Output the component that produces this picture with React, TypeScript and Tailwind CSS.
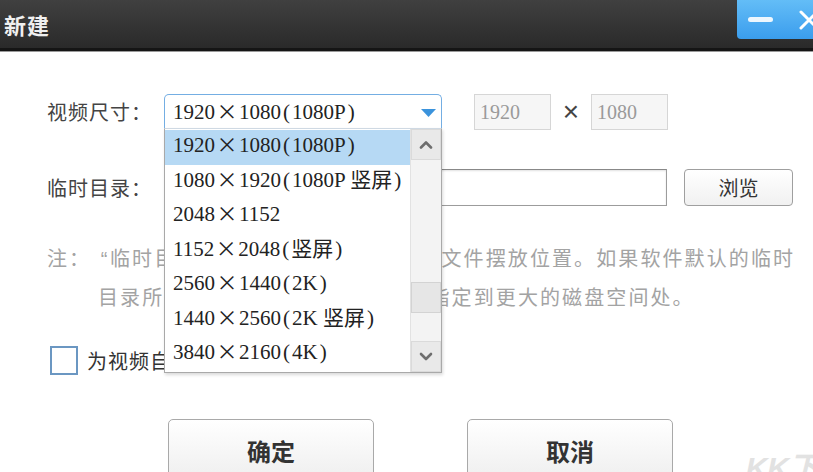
import React from 'react';

const cjk = '"Noto Sans CJK SC", "Noto Sans", sans-serif';
const mixed = '"Liberation Serif", "Noto Sans CJK SC", serif';

const options = [
  ['1920', '1080', '1080P'],
  ['1080', '1920', '1080P 竖屏'],
  ['2048', '1152', ''],
  ['1152', '2048', '竖屏'],
  ['2560', '1440', '2K'],
  ['1440', '2560', '2K 竖屏'],
  ['3840', '2160', '4K'],
];

function Size({ w, h, tag }: { w: string; h: string; tag: string }) {
  return (
    <span className="whitespace-nowrap" style={{ fontFamily: mixed }}>
      {w}
      <span className="inline-block w-[24px] text-center" style={{ fontFamily: cjk }}>×</span>
      {h}
      {tag && (
        <>
          <span className="inline-block w-[11px] text-center">(</span>
          {tag}
          <span className="inline-block w-[11px] text-center">)</span>
        </>
      )}
    </span>
  );
}

function Chevron({ up }: { up?: boolean }) {
  return (
    <svg width="14" height="9" viewBox="0 0 14 9">
      <path
        d={up ? 'M2 7.5 L7 2.5 L12 7.5' : 'M2 2 L7 7 L12 2'}
        fill="none"
        stroke="#6e6e6e"
        strokeWidth="2.6"
        strokeLinecap="round"
        strokeLinejoin="round"
      />
    </svg>
  );
}

export default function App() {
  return (
    <div className="relative w-[813px] h-[472px] overflow-hidden bg-white" style={{ fontFamily: cjk }}>
      {/* title bar */}
      <div className="relative h-[48px] bg-gradient-to-b from-[#404040] to-[#2a2a2a] flex items-center">
        <span className="pl-[4px] text-[22px] font-bold text-[#f0f0f0] tracking-[1px]">新建</span>
        <div className="absolute right-[-20px] top-0 h-[39px] w-[96px] rounded-bl-[4px] bg-gradient-to-b from-[#63bdf7] to-[#3a9ded] flex items-center">
          <div className="ml-[11px] h-[5px] w-[25px] rounded-full bg-white/90" />
          <svg className="ml-[25px]" width="22" height="22" viewBox="0 0 22 22">
            <path d="M3 3 L19 19 M19 3 L3 19" stroke="white" strokeWidth="3" strokeLinecap="round" />
          </svg>
        </div>
      </div>
      <div className="h-[3px] bg-[#151515]" />
      <div className="h-[1px] bg-[#9a9a9a]" />

      <div className="pl-[47px]">
        {/* row 1 */}
        <div className="mt-[42px] flex items-center h-[35px]">
          <span className="w-[117px] text-[20px] text-[#444] tracking-[1px]">视频尺寸：</span>
          <div className="relative w-[278px] h-[35px]">
            <div className="h-full rounded-t-[5px] border border-[#74aee3] border-b-0 bg-white flex items-center pl-[8px] text-[21px] text-[#222]">
              <Size w="1920" h="1080" tag="1080P" />
              <svg className="absolute right-[6px] top-[15px]" width="15" height="8" viewBox="0 0 15 8">
                <path d="M0 0 H15 L7.5 8 Z" fill="#3b93dc" />
              </svg>
            </div>
            {/* dropdown list */}
            <div className="absolute left-0 top-[34px] z-10 w-[278px] h-[245px] border border-[#a9a9a9] border-t-[#cfd9e3] bg-white flex shadow-[1px_2px_3px_rgba(0,0,0,0.15)]">
              <div className="flex-1 pt-[1px]">
                {options.map(([w, h, tag], i) => (
                  <div
                    key={i}
                    className={`h-[34.5px] flex items-center pl-[8px] pb-[5px] text-[21px] text-[#222] ${i === 0 ? 'bg-[#b6d9f4]' : ''}`}
                  >
                    <Size w={w} h={h} tag={tag} />
                  </div>
                ))}
              </div>
              <div className="w-[31px] bg-[#f3f3f3] border-l border-[#e2e2e2] flex flex-col">
                <div className="h-[31px] bg-[#e9e9e9] border border-[#dadada] flex items-center justify-center">
                  <Chevron up />
                </div>
                <div className="h-[122px]" />
                <div className="h-[31px] bg-[#e6e6e6] border border-[#d3d3d3]" />
                <div className="flex-1" />
                <div className="h-[31px] bg-[#e9e9e9] border border-[#dadada] flex items-center justify-center">
                  <Chevron />
                </div>
              </div>
            </div>
          </div>
          <div className="ml-[32px] w-[77px] h-[36px] border border-[#d6d6d6] bg-[#f6f6f6] flex items-center pl-[5px] text-[20px] text-[#9a9a9a]" style={{ fontFamily: mixed }}>
            1920
          </div>
          <span className="w-[40px] text-center text-[28px] leading-none text-[#444]" style={{ fontFamily: '"Liberation Sans", sans-serif' }}>×</span>
          <div className="w-[77px] h-[36px] border border-[#d6d6d6] bg-[#f6f6f6] flex items-center pl-[5px] text-[20px] text-[#9a9a9a]" style={{ fontFamily: mixed }}>
            1080
          </div>
        </div>

        {/* row 2 */}
        <div className="mt-[40px] flex items-center h-[37px]">
          <span className="w-[117px] text-[20px] text-[#444] tracking-[1px]">临时目录：</span>
          <div className="w-[503px] h-[37px] border border-[#9c9c9c] border-t-[#888] bg-white shadow-[inset_0_1px_2px_rgba(0,0,0,0.12)]" />
          <button className="ml-[17px] w-[109px] h-[37px] rounded-[4px] border border-[#9f9f9f] bg-gradient-to-b from-white to-[#f1f1f1] text-[20px] text-[#333]">
            浏览
          </button>
        </div>

        {/* note */}
        <div className="mt-[33px] flex text-[20px] leading-[38px] text-[#a3a3a3] tracking-[2.1px]">
          <span className="w-[51px] shrink-0">注：</span>
          <div className="whitespace-nowrap">
            <div>
              <span className="inline-block w-[12px] text-center tracking-normal" style={{ fontFamily: '"Liberation Sans", sans-serif' }}>“</span>临时目录”是指视频制作时的临时文件摆放位置。如果软件默认的临时
            </div>
            <div>目录所在的磁盘空间不够，请将其指定到更大的磁盘空间处。</div>
          </div>
        </div>

        {/* checkbox */}
        <div className="mt-[29px] flex items-center h-[31px]">
          <div className="ml-[3px] w-[28px] h-[29px] border-2 border-[#6b97c2] bg-white" />
          <span className="ml-[9px] text-[20px] text-[#333] tracking-[1px]">为视频自动添加片头片尾</span>
        </div>

        {/* buttons */}
        <div className="mt-[43px] pl-[121px] flex gap-[93px]">
          <button className="w-[206px] h-[64px] rounded-[5px] border border-[#a9a9a9] bg-gradient-to-b from-white to-[#eeeeee] text-[24px] font-bold text-[#333] flex items-start justify-center pt-[13px]">
            确定
          </button>
          <button className="w-[206px] h-[64px] rounded-[5px] border border-[#a9a9a9] bg-gradient-to-b from-white to-[#eeeeee] text-[24px] font-bold text-[#333] flex items-start justify-center pt-[13px]">
            取消
          </button>
        </div>
      </div>

      <span className="absolute right-[-6px] bottom-[-18px] text-[30px] font-bold italic text-[#e2e2e2]" style={{ fontFamily: '"Liberation Sans", "Noto Sans CJK SC", sans-serif' }}>
        KK下
      </span>
    </div>
  );
}
